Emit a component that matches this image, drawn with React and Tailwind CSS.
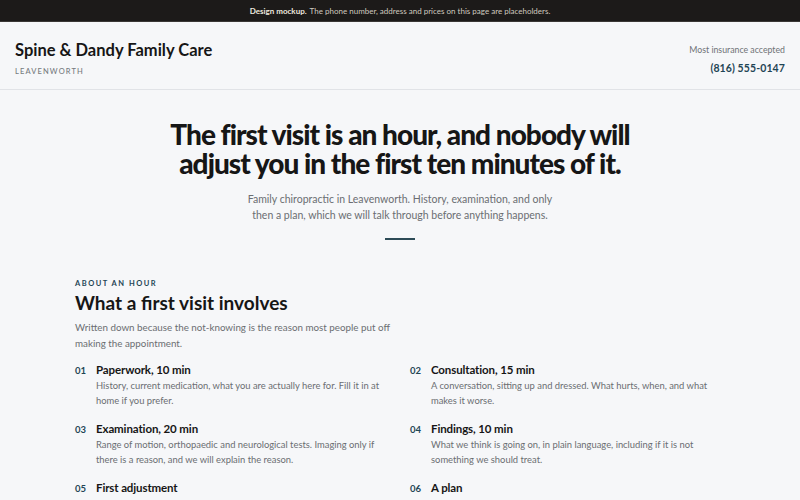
import React from "react";

const sans = { fontFamily: "Lato, 'Liberation Sans', sans-serif" };

const steps = [
  ["01", "Paperwork, 10 min", ["History, current medication, what you are actually here for. Fill it in at", "home if you prefer."]],
  ["02", "Consultation, 15 min", ["A conversation, sitting up and dressed. What hurts, when, and what", "makes it worse."]],
  ["03", "Examination, 20 min", ["Range of motion, orthopaedic and neurological tests. Imaging only if", "there is a reason, and we will explain the reason."]],
  ["04", "Findings, 10 min", ["What we think is going on, in plain language, including if it is not", "something we should treat."]],
  ["05", "First adjustment", ["Only if the findings say it is a good idea, and only once you have", "agreed to it."]],
  ["06", "A plan", ["How many visits we expect, what they cost, and what you can do at", "home in between."]],
];

export default function App() {
  return (
    <div className="h-[500px] overflow-hidden bg-[#f6f7f9] text-[#161616]" style={sans}>
      {/* notice bar */}
      <div className="h-[22px] bg-[#1c1a19] flex items-center justify-center text-[8px] text-[#cfc9bf] border-b border-[#3a3836]">
        <span className="font-bold text-[#ece8df] mr-[3px]">Design mockup.</span>
        The phone number, address and prices on this page are placeholders.
      </div>

      {/* header */}
      <header className="h-[68px] border-b border-[#e1e3e7] px-[15px] flex justify-between">
        <div className="pt-[17px]">
          <div className="text-[16.5px] leading-[22px] font-bold">Spine &amp; Dandy Family Care</div>
          <div className="mt-[6px] text-[7.5px] leading-[10px] tracking-[0.15em] text-[#777b80] font-medium">
            LEAVENWORTH
          </div>
        </div>
        <div className="pt-[22px] text-right">
          <div className="text-[8.75px] leading-[12px] text-[#6f7276]">Most insurance accepted</div>
          <div className="mt-[5px] text-[10.5px] leading-[14px] font-bold text-[#1f4555] tracking-[0.01em]">
            (816) 555-0147
          </div>
        </div>
      </header>

      {/* hero */}
      <section className="pt-[30px] flex flex-col items-center text-center">
        <h1 className="text-[28px] leading-[29px] font-black tracking-[-0.035em]">
          The first visit is an hour, and nobody will
          <br />
          adjust you in the first ten minutes of it.
        </h1>
        <p className="mt-[13px] text-[10.5px] leading-[16px] text-[#6b6e72]">
          Family chiropractic in Leavenworth. History, examination, and only
          <br />
          then a plan, which we will talk through before anything happens.
        </p>
        <div className="mt-[15px] w-[30px] h-[2px] bg-[#2d4b57]" />
      </section>

      {/* first visit */}
      <section className="mx-[75px] mt-[39px]">
        <div className="text-[7.5px] leading-[10px] font-bold tracking-[0.2em] text-[#1f4555]">ABOUT AN HOUR</div>
        <h2 className="mt-[2px] text-[19px] leading-[24px] font-bold">What a first visit involves</h2>
        <p className="mt-[4px] text-[9.8px] leading-[16px] text-[#6b6e72]">
          Written down because the not-knowing is the reason most people put off
          <br />
          making the appointment.
        </p>

        <div className="mt-[11px] grid grid-cols-2 gap-x-[20px] gap-y-[13px]">
          {steps.map(([n, t, lines]) => (
            <div key={n} className="flex">
              <div className="w-[21px] shrink-0 pt-[2px] text-[9.5px] leading-[14px] font-bold text-[#1f4555]">{n}</div>
              <div className="flex-1">
                <div className="text-[11.5px] leading-[16px] font-bold tracking-[-0.01em]">{t}</div>
                <div className="mt-[1px] text-[9.4px] leading-[14.5px] text-[#6b6e72] whitespace-nowrap">
                  {lines[0]}
                  <br />
                  {lines[1]}
                </div>
              </div>
            </div>
          ))}
        </div>
      </section>
    </div>
  );
}
